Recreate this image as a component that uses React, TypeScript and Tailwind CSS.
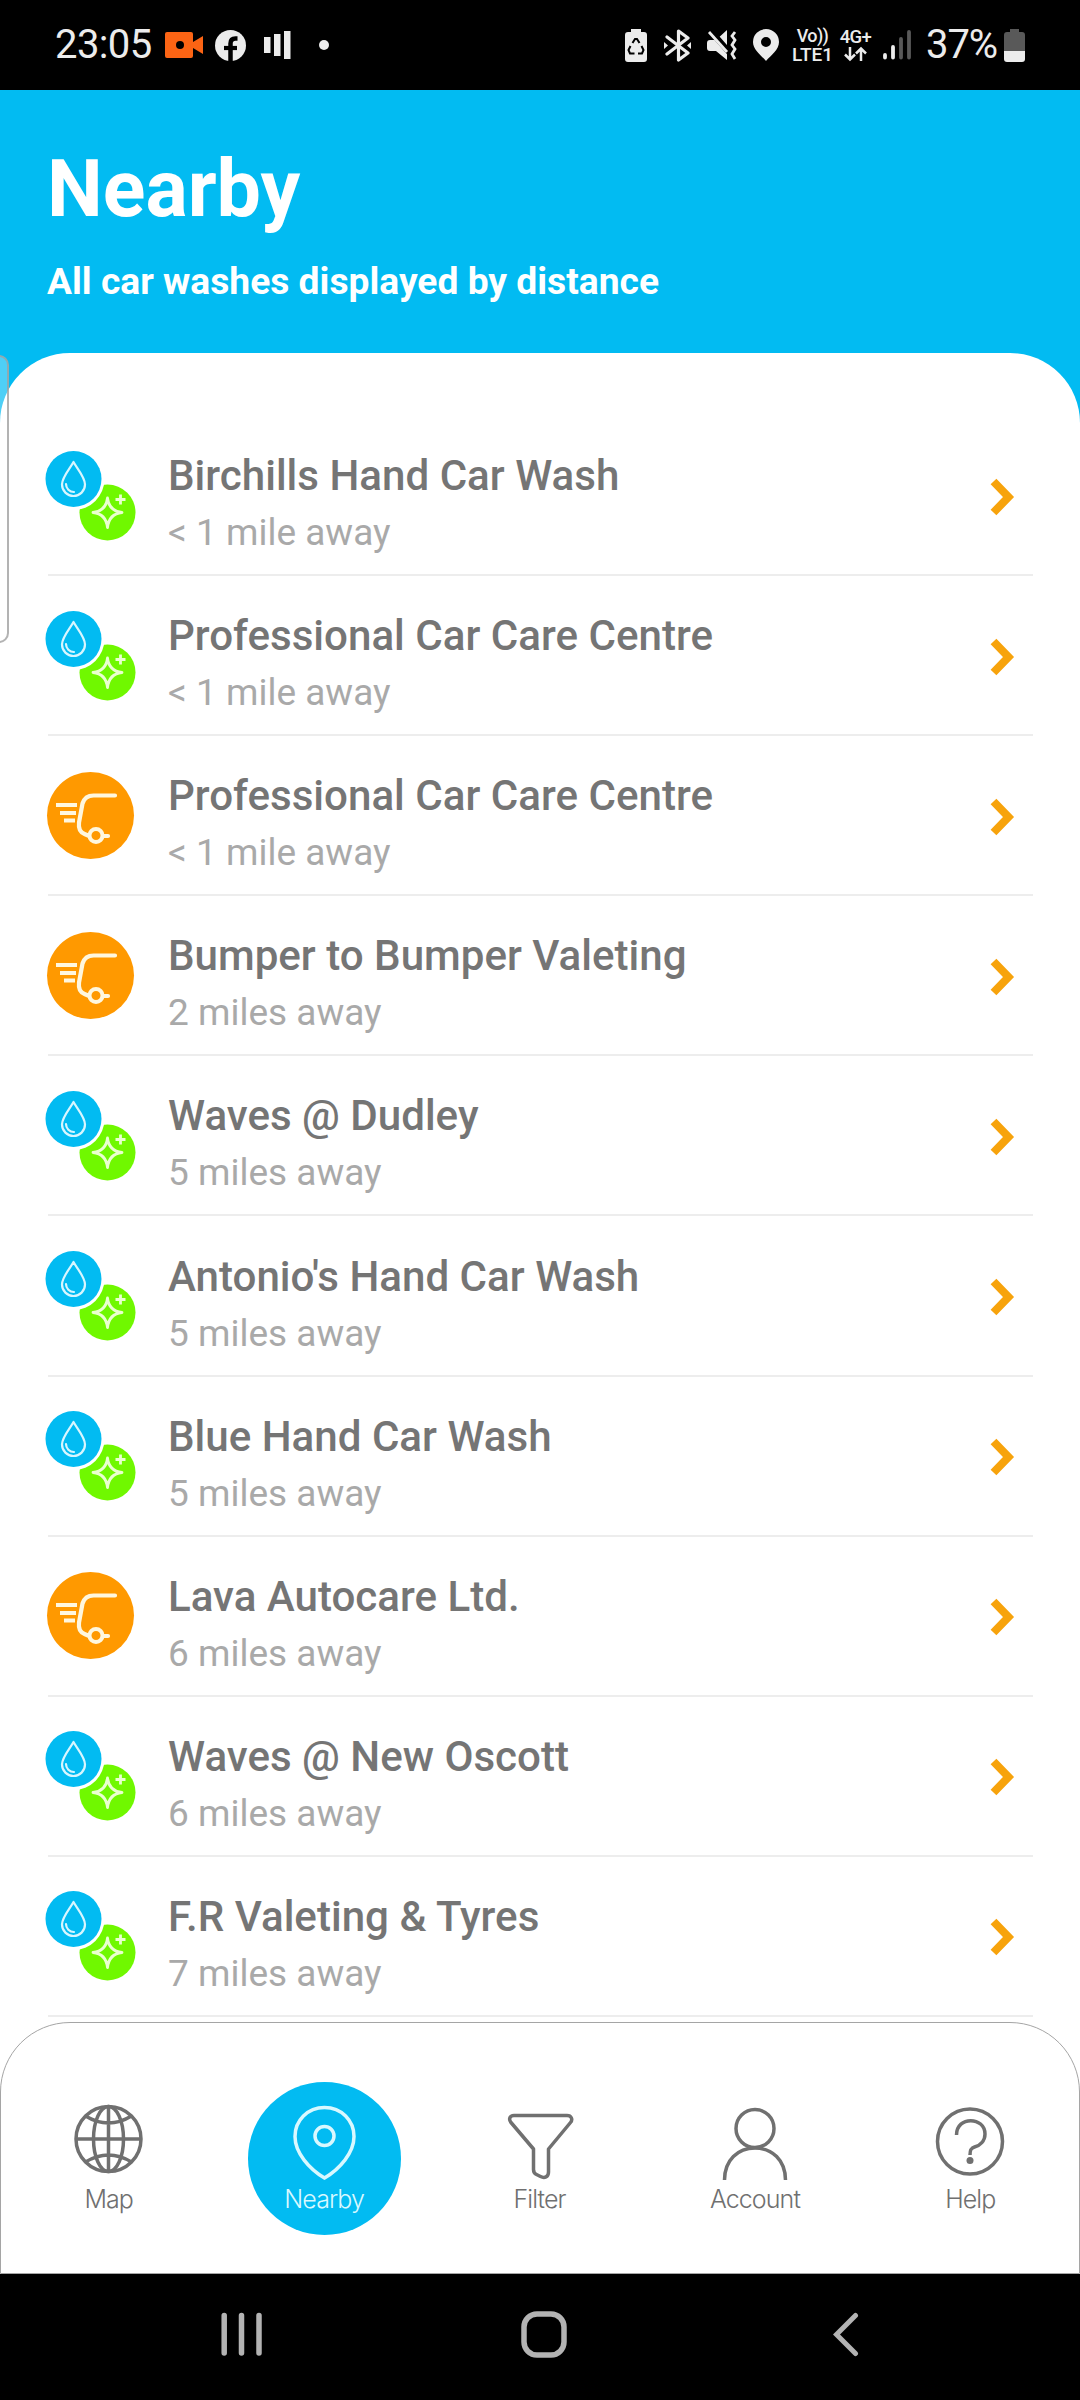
import type { ReactNode } from "react";

type Kind = "wash" | "mobile";

const places: { name: string; distance: string; kind: Kind }[] = [
  { name: "Birchills Hand Car Wash", distance: "< 1 mile away", kind: "wash" },
  { name: "Professional Car Care Centre", distance: "< 1 mile away", kind: "wash" },
  { name: "Professional Car Care Centre", distance: "< 1 mile away", kind: "mobile" },
  { name: "Bumper to Bumper Valeting", distance: "2 miles away", kind: "mobile" },
  { name: "Waves @ Dudley", distance: "5 miles away", kind: "wash" },
  { name: "Antonio's Hand Car Wash", distance: "5 miles away", kind: "wash" },
  { name: "Blue Hand Car Wash", distance: "5 miles away", kind: "wash" },
  { name: "Lava Autocare Ltd.", distance: "6 miles away", kind: "mobile" },
  { name: "Waves @ New Oscott", distance: "6 miles away", kind: "wash" },
  { name: "F.R Valeting & Tyres", distance: "7 miles away", kind: "wash" },
];

function WashIcon() {
  return (
    <svg width="92" height="92" viewBox="0 0 92 92" fill="none">
      <circle cx="62.5" cy="61.5" r="28" fill="#70f800" />
      <circle cx="28.5" cy="28" r="31" fill="#fff" />
      <circle cx="28.5" cy="28" r="28" fill="#02bbf2" />
      <path
        d="M28.5 11C25 17.5 17 26 17 33.5a11.5 11.5 0 0 0 23 0C40 26 32 17.5 28.5 11z"
        stroke="#d8f6ff"
        strokeWidth="2.2"
        strokeLinejoin="round"
      />
      <path d="M21 33a8 8 0 0 0 8 8" stroke="#d8f6ff" strokeWidth="2.2" strokeLinecap="round" />
      <path
        d="M62.5 47Q64 60 77 61.5Q64 63 62.5 76.5Q61 63 48 61.5Q61 60 62.5 47z"
        stroke="#eaffd0"
        strokeWidth="2.8"
        strokeLinejoin="round"
      />
      <path d="M75.5 43.5v10M70.5 48.5h10" stroke="#eaffd0" strokeWidth="2.8" />
    </svg>
  );
}

function MobileIcon() {
  return (
    <svg width="92" height="92" viewBox="0 0 92 92" fill="none">
      <circle cx="45.5" cy="44.5" r="43.5" fill="#ff9900" />
      <path
        d="M70 24.5H48.5Q40 24.5 37.5 32.5L34 51.5Q33 60.5 39.5 63L43 64.5M58 65h5"
        stroke="#fff7de"
        strokeWidth="4.2"
        strokeLinecap="round"
        strokeLinejoin="round"
      />
      <circle cx="51" cy="64.5" r="6.5" stroke="#fff7de" strokeWidth="4" />
      <path d="M11 34h21M15 42h16M19 49.5h11" stroke="#fff7de" strokeWidth="4" />
    </svg>
  );
}

function StatusBar() {
  return (
    <div className="flex h-[90px] items-center bg-black pl-[55px] text-[#ececec]">
      <span className="w-[110px] text-[40px] leading-none tracking-[-0.6px]">23:05</span>
      <svg width="38" height="26" viewBox="0 0 38 26">
        <path d="M2 0h24q2 0 2 2v8l10-6v18l-10-6v8q0 2-2 2H2q-2 0-2-2V2q0-2 2-2z" fill="#fb6414" />
        <circle cx="15" cy="13" r="4" fill="#000" />
      </svg>
      <svg className="ml-3" width="31" height="31" viewBox="0 0 31 31">
        <circle cx="15.5" cy="15.5" r="15.5" fill="#ececec" />
        <path d="M15.5 31V13.5q0-5 5-5h2" stroke="#000" strokeWidth="4.5" fill="none" />
        <path d="M9 18h13" stroke="#000" strokeWidth="4.2" />
      </svg>
      <svg className="ml-[18px]" width="28" height="28" viewBox="0 0 28 28" fill="#ececec">
        <path d="M0 6h6.500v16H0zM10 3h6.500v22H10zM20 0h6.500v28H20z" />
      </svg>
      <span className="ml-[27px] size-[10px] rounded-full bg-[#ececec]" />

      <svg className="ml-[296px]" width="22" height="33" viewBox="0 0 22 33">
        <path d="M6 3V0h10v3h3q3 0 3 3v24q0 3-3 3H3q-3 0-3-3V6q0-3 3-3z" fill="#ececec" />
        <path
          d="M7.5 14l2.5-4h2l2.5 4M16.5 17l2 4-1.5 3.5h-4M9.5 24.5H5L3.5 21l2-4"
          stroke="#000"
          strokeWidth="2"
          fill="none"
        />
      </svg>
      <svg className="ml-[17px]" width="27" height="33" viewBox="0 0 27 33" fill="none" stroke="#ececec" strokeWidth="3.2">
        <path d="M3 8l21 16-9.5 7V2L24 9 3 25" strokeLinejoin="round" strokeLinecap="round" />
        <path d="M0 13l4 3.5L0 20zM27 13l-4 3.5 4 3.5z" fill="#ececec" stroke="none" />
      </svg>
      <svg className="ml-4" width="30" height="31" viewBox="0 0 30 31" fill="#ececec">
        <path d="M3 10h6L20 0v30L9 21H3q-3 0-3-3v-5q0-3 3-3z" />
        <path d="M1-2l22 25" stroke="#000" strokeWidth="6" />
        <path d="M2 2l18 20" stroke="#ececec" strokeWidth="2.8" />
        <path d="M28 2l-3 4 3 4-3 5 3 4-3 5 3 5" fill="none" stroke="#ececec" strokeWidth="2.8" />
      </svg>
      <svg className="ml-4" width="26" height="32" viewBox="0 0 26 32">
        <path
          d="M13 0a13 13 0 0 0-13 13c0 8 8 13 13 19 5-6 13-11 13-19A13 13 0 0 0 13 0zm0 8a5 5 0 1 1 0 10 5 5 0 0 1 0-10z"
          fill="#ececec"
        />
      </svg>
      <div className="ml-[13px] flex w-[41px] flex-col items-center font-medium">
        <span className="text-[18px] leading-[18px] tracking-[-0.6px]">Vo))</span>
        <span className="text-[19px] leading-[19px]">LTE1</span>
      </div>
      <div className="ml-[7px] flex w-[31px] flex-col items-center text-[18.5px] leading-[18px] font-medium">
        <span className="tracking-[-0.6px]">4G+</span>
        <svg width="23" height="16" viewBox="0 0 23 16" fill="none" stroke="#ececec" strokeWidth="2.5">
          <path d="M6 1v12M1 8.5l5 5 5-5M17 15V3M12 7.5l5-5 5 5" />
        </svg>
      </div>
      <svg className="ml-3" width="28" height="30" viewBox="0 0 28 30" strokeWidth="3.8" strokeLinecap="round">
        <path d="M2 25v2.5M10 17v10.5" stroke="#ececec" />
        <path d="M18 9v18.5M26 2v25.5" stroke="#595959" />
      </svg>
      <span className="ml-[15px] w-[78px] text-[40px] leading-none tracking-[-1.1px]">37%</span>
      <svg width="21" height="33" viewBox="0 0 21 33">
        <path d="M6 3V0h9v3h3q3 0 3 3v16H0V6q0-3 3-3z" fill="#595959" />
        <path d="M0 22h21v8q0 3-3 3H3q-3 0-3-3z" fill="#ececec" />
      </svg>
    </div>
  );
}

function PlaceRow({ name, distance, kind }: { name: string; distance: string; kind: Kind }) {
  return (
    <li className="mx-auto flex h-[160.1px] w-[985px] items-center border-b-2 border-[#ededed] pt-[3px]">
      <div className="-ml-[3px] flex w-[123.5px] shrink-0">
        {kind === "wash" ? <WashIcon /> : <MobileIcon />}
      </div>
      <div className="flex-1 pt-4">
        <h2 className="text-[42.1px] leading-[48px] font-medium text-[#757575]">{name}</h2>
        <p className="mt-[9px] text-[37px] leading-[48px] text-[#a9a9a9]">{distance}</p>
      </div>
      <svg className="mr-[18px]" width="25" height="38" viewBox="0 0 25 38" fill="none">
        <path d="M3.5 3.5L18.5 19 3.5 34.5" stroke="#f7a30c" strokeWidth="8" />
      </svg>
    </li>
  );
}

function NavItem({ label, active, children }: { label: string; active?: boolean; children: ReactNode }) {
  return (
    <div className="flex flex-1 justify-center">
      <div
        className={
          active
            ? "flex size-[153px] flex-col items-center rounded-full bg-[#02bbf2] pt-5 text-[#d8f8ff]"
            : "flex size-[153px] flex-col items-center pt-5 text-[#707070]"
        }
      >
        <svg width="76" height="80" viewBox="0 0 76 80" fill="none" stroke="currentColor" strokeWidth="3.5">
          {children}
        </svg>
        <span className="mt-[2px] font-[Inter,sans-serif] text-[25px] leading-[30px] font-light tracking-[-0.9px]">
          {label}
        </span>
      </div>
    </div>
  );
}

function BottomNav() {
  return (
    <nav className="flex h-[252px] rounded-t-[70px] border border-[#a5a5a5] bg-white pt-[59px] pr-px">
      <NavItem label="Map">
        <circle cx="37.5" cy="37" r="32.5" />
        <ellipse cx="37.5" cy="37" rx="15" ry="32.5" />
        <path d="M37.5 4v66M4.5 37h66M14.5 14q23 14 46 0M14.5 60q23-14 46 0" />
      </NavItem>
      <NavItem label="Nearby" active>
        <path d="M38.5 5.5c-17 0-29.5 13-29.5 29C9 51 23.5 67 38.5 76c15-9 29.5-25 29.5-41.5 0-16-12.5-29-29.5-29z" />
        <circle cx="38.5" cy="34" r="9.5" />
      </NavItem>
      <NavItem label="Filter">
        <path
          d="M12 13.5h53c4.5 0 6 4 3.5 7L46.5 47v23c0 5-4 6.5-8 4.5l-4-2c-2-1-3-2.5-3-5V47L9 20.5c-2.5-3-1.5-7 3-7z"
          strokeLinejoin="round"
        />
      </NavItem>
      <NavItem label="Account">
        <circle cx="38" cy="26.5" r="19" />
        <path d="M7.5 78C7.5 58 21 46 38 46s30.5 12 30.5 32" />
      </NavItem>
      <NavItem label="Help">
        <circle cx="38" cy="39.5" r="32.5" />
        <path d="M24.5 33C24.5 13.5 53 14.5 53 32c0 7-5 11.5-10.5 13-3.5 1-4.5 3-4.5 8" />
        <circle cx="38" cy="58.5" r="3.5" fill="currentColor" stroke="none" />
      </NavItem>
    </nav>
  );
}

function SystemNav() {
  return (
    <div className="flex h-[126px] items-start bg-black pt-[37px]">
      <svg className="ml-[221px]" width="42" height="47" viewBox="0 0 42 47" stroke="#b3b3b3" strokeWidth="5.5" strokeLinecap="round">
        <path d="M3.2 4.5v37.500M20.5 4.5v37.500M38 4.5v37.500" />
      </svg>
      <svg className="ml-[257px]" width="48" height="49" viewBox="0 0 48 49" fill="none">
        <rect x="4" y="3" width="40" height="41" rx="13" stroke="#b3b3b3" strokeWidth="5.5" />
      </svg>
      <svg className="ml-[265px]" width="26" height="47" viewBox="0 0 26 47" fill="none" stroke="#b3b3b3" strokeWidth="5" strokeLinecap="round">
        <path d="M22.5 4.5L3.5 23.5 22.5 42.5" />
      </svg>
    </div>
  );
}

export default function App() {
  return (
    <div className="relative flex h-[2400px] w-[1080px] flex-col overflow-hidden bg-[#02bbf2] font-[Roboto,sans-serif]">
      <StatusBar />

      <header className="h-[263px] px-[47px] pt-[51px] text-white">
        <h1 className="text-[79px] leading-[96px] font-bold">Nearby</h1>
        <p className="mt-5 text-[37.2px] leading-[48px] font-bold">All car washes displayed by distance</p>
      </header>

      <main className="flex flex-1 flex-col rounded-t-[70px] bg-white pt-[63px]">
        <ul className="flex-1">
          {places.map((place, i) => (
            <PlaceRow key={i} {...place} />
          ))}
        </ul>
        <BottomNav />
      </main>

      <SystemNav />

      {/* edge panel handle */}
      <div className="absolute top-[355px] -left-4 h-[288px] w-[25px] rounded-[10px] border-2 border-[#a0a0a0]/80 bg-white/30" />
    </div>
  );
}
